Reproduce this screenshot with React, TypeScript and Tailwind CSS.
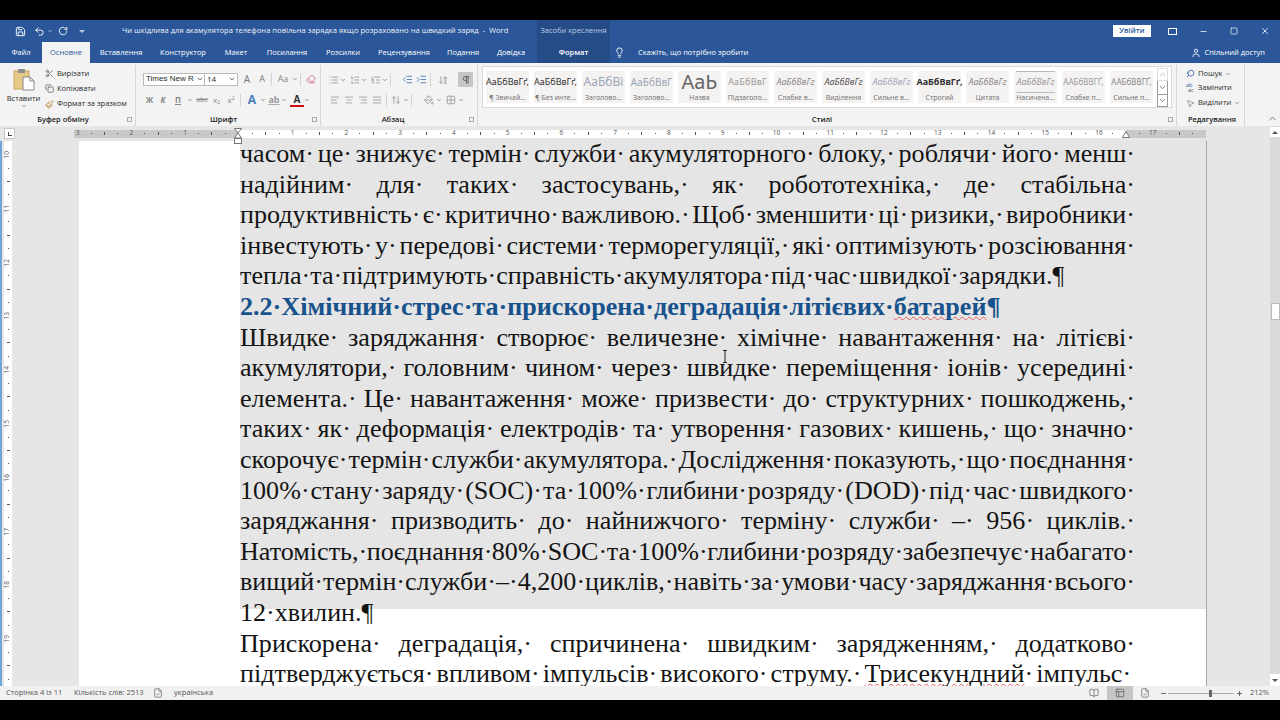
import type { ReactNode } from "react";
import {
  AlignCenter, AlignJustify, AlignLeft, AlignRight, ArrowDownAZ, BookOpen, ChevronDown, ChevronUp, Copy,
  Eraser, FileCheck, Grid2x2, IndentDecrease, IndentIncrease, Layout, Lightbulb, List, ListOrdered, ListTree,
  Minus, MousePointer2, Paintbrush, PaintBucket, Pilcrow, Plus, RotateCw, Save, Scissors, Search, Square,
  Undo2, User, X, ArrowUpDown,
} from "lucide-react";

const tabs = [
  { label: "Файл", w: "w-[42px]" },
  { label: "Основне", w: "w-[48px]", active: true },
  { label: "Вставлення", w: "w-[62px]" },
  { label: "Конструктор", w: "w-[62px]" },
  { label: "Макет", w: "w-[44px]" },
  { label: "Посилання", w: "w-[58px]" },
  { label: "Розсилки", w: "w-[54px]" },
  { label: "Рецензування", w: "w-[68px]" },
  { label: "Подання", w: "w-[50px]" },
  { label: "Довідка", w: "w-[46px]" },
];

const styles = [
  { s: "АаБбВвГґ,", l: "¶ Звичай...", c: "text-[9px] text-[#333]" },
  { s: "АаБбВвГґ,", l: "¶ Без инте...", c: "text-[9px] text-[#333]" },
  { s: "АаБбВі", l: "Заголово...", c: "text-[12px] text-[#9aa5b5]" },
  { s: "АаБбВвГ", l: "Заголово...", c: "text-[10px] text-[#9aa5b5]" },
  { s: "АаЬ", l: "Назва", c: "text-[20px] leading-[20px] text-[#666]" },
  { s: "АаБбВвГ", l: "Підзаголо...", c: "text-[9px] tracking-wide text-[#999]" },
  { s: "АаБбВвГг", l: "Слабке в...", c: "text-[9px] italic text-[#888]" },
  { s: "АаБбВвГг", l: "Виділення", c: "text-[9px] italic text-[#555]" },
  { s: "АаБбВвГг", l: "Сильне в...", c: "text-[9px] italic text-[#a0a8b8]" },
  { s: "АаБбВвГґ,", l: "Строгий", c: "text-[9px] font-bold text-[#333]" },
  { s: "АаБбВвГг", l: "Цитата", c: "text-[9px] italic text-[#888]" },
  { s: "АаБбВвГг", l: "Насичена...", c: "text-[9px] italic text-[#999] border-y border-[#bbb]" },
  { s: "ААБбВВГҐ,", l: "Слабке п...", c: "text-[8px] text-[#999]" },
  { s: "ААБбВВГҐ,", l: "Сильне п...", c: "text-[8px] text-[#888]" },
];

const pageLines: { t: ReactNode; plain?: boolean; heading?: boolean }[] = [
  { t: "часом· це· знижує· термін· служби· акумуляторного· блоку,· роблячи· його· менш·" },
  { t: "надійним· для· таких· застосувань,· як· робототехніка,· де· стабільна·" },
  { t: "продуктивність· є· критично· важливою.· Щоб· зменшити· ці· ризики,· виробники·" },
  { t: "інвестують· у· передові· системи· терморегуляції,· які· оптимізують· розсіювання·" },
  { t: "тепла· та· підтримують· справність· акумулятора· під· час· швидкої· зарядки.¶", plain: true },
  {
    t: (
      <>
        2.2· Хімічний· стрес· та· прискорена· деградація· літієвих·{" "}
        <span className="underline decoration-wavy decoration-[#e06060] decoration-1">батарей</span>¶
      </>
    ),
    plain: true,
    heading: true,
  },
  { t: "Швидке· заряджання· створює· величезне· хімічне· навантаження· на· літієві·" },
  { t: "акумулятори,· головним· чином· через· швидке· переміщення· іонів· усередині·" },
  { t: "елемента.· Це· навантаження· може· призвести· до· структурних· пошкоджень,·" },
  { t: "таких· як· деформація· електродів· та· утворення· газових· кишень,· що· значно·" },
  { t: "скорочує· термін· служби· акумулятора.· Дослідження· показують,· що· поєднання·" },
  { t: "100%· стану· заряду· (SOC)· та· 100%· глибини· розряду· (DOD)· під· час· швидкого·" },
  { t: "заряджання· призводить· до· найнижчого· терміну· служби· –· 956· циклів.·" },
  { t: "Натомість,· поєднання· 80%· SOC· та· 100%· глибини· розряду· забезпечує· набагато·" },
  { t: "вищий· термін· служби· –· 4,200· циклів,· навіть· за· умови· часу· заряджання· всього·" },
  { t: "12· хвилин.¶", plain: true },
  { t: "Прискорена· деградація,· спричинена· швидким· зарядженням,· додатково·" },
  {
    t: (
      <>
        підтверджується· впливом· імпульсів· високого· струму.·{" "}
        <span className="underline decoration-wavy decoration-[#e06060] decoration-1">Трисекундний</span>· імпульс·
      </>
    ),
  },
];

// ruler marks: number, dot, tick, dot for every centimetre
const hMarks = [3, 2, 1, 0, 1, 2, 3, 4, 5, 6, 7, 8, 9, 10, 11, 12, 13, 14, 15, 16, 17];
const vMarks = [10, 11, 12, 13, 14, 15, 16, 17, 18, 19];

function Slot({ w, children, className = "" }: { w: string; children?: ReactNode; className?: string }) {
  return <div className={`flex h-[14px] shrink-0 items-center justify-center ${w} ${className}`}>{children}</div>;
}

function Caret() {
  return <ChevronDown size={6} strokeWidth={3} className="shrink-0 text-[#777]" />;
}

function GroupLabel({ children, launcher = true, pr = "" }: { children: ReactNode; launcher?: boolean; pr?: string }) {
  return (
    <div className={`relative mt-auto mb-[1px] text-center text-[7.5px] font-semibold leading-[11px] text-[#222] ${pr}`}>
      {children}
      {launcher && <span className="absolute right-[3px] top-[3px] h-[5px] w-[5px] border border-[#aaa]" />}
    </div>
  );
}

function Sep() {
  return <div className="mx-[2px] h-[13px] w-px shrink-0 bg-[#d4d4d4]" />;
}

function PasteIcon() {
  return (
    <svg width="22" height="23" viewBox="0 0 22 23">
      <rect x="1" y="3" width="15" height="18" fill="#e8c98a" stroke="#c9a25e" />
      <rect x="5" y="1" width="7" height="4" fill="#8c8c8c" />
      <path d="M10 9h7l4 4v9H10z" fill="#fff" stroke="#888" />
      <path d="M17 9v4h4" fill="none" stroke="#888" />
    </svg>
  );
}

function StatusViewIcons() {
  return (
    <div className="flex h-full items-center">
      <Slot w="w-[26px]">
        <BookOpen size={10} className="text-[#777]" />
      </Slot>
      <div className="flex h-full w-[26px] items-center justify-center bg-[#c6c6c6]">
        <Layout size={10} className="text-[#666]" />
      </div>
      <Slot w="w-[24px]">
        <FileCheck size={10} className="text-[#777]" />
      </Slot>
    </div>
  );
}

export default function App() {
  return (
    <div className="flex h-screen w-full flex-col overflow-hidden bg-black font-['Open_Sans',sans-serif]">
      <div className="h-5 shrink-0" />

      {/* title bar */}
      <div className="flex h-[22px] shrink-0 items-center bg-[#2b579a] text-white">
        <div className="flex w-[122px] shrink-0 items-center pl-[15px]">
          <Save size={11} />
          <Undo2 size={11} className="ml-[8px]" />
          <ChevronDown size={6} className="ml-[2px]" />
          <RotateCw size={10} className="ml-[5px]" />
          <div className="ml-[11px] h-0 w-0 border-x-[3px] border-t-[3px] border-x-transparent border-t-white/70" />
        </div>
        <div className="w-[415px] shrink-0 whitespace-pre text-[7.6px] text-white/95">
          Чи шкідлива для акамулятора телефона повільна зарядка якщо розраховано на швидкий заряд  -  Word
        </div>
        <div className="flex h-full w-[73px] shrink-0 items-center justify-center bg-[#264c87] text-[7.5px] text-[#b9c9e2]">
          Засоби креслення
        </div>
        <div className="ml-[503px] flex h-[12px] w-[38px] items-center justify-center bg-white text-[7.5px] font-semibold text-[#2b579a]">
          Увійти
        </div>
        <Slot w="w-[16px]" className="ml-[13px]">
          <div className="h-[7px] w-[9px] border border-white" />
        </Slot>
        <Slot w="w-[16px]" className="ml-[15px]">
          <Minus size={9} />
        </Slot>
        <Slot w="w-[16px]" className="ml-[15px]">
          <Square size={8} />
        </Slot>
        <Slot w="w-[16px]" className="ml-[15px]">
          <X size={10} />
        </Slot>
      </div>

      {/* tabs */}
      <div className="flex h-[21px] shrink-0 items-stretch bg-[#2b579a] text-[7.5px] text-white">
        {tabs.map((tab) => (
          <div
            key={tab.label}
            className={`flex shrink-0 items-center justify-center ${tab.w} ${tab.active ? "bg-[#f3f3f3] text-[#2b579a]" : ""}`}
          >
            {tab.label}
          </div>
        ))}
        <div className="ml-[3px] flex w-[73px] shrink-0 items-center justify-center bg-[#264c87] font-semibold">Формат</div>
        <Lightbulb size={11} className="ml-[4px] mr-[13px] self-center" />
        <div className="self-center">Скажіть, що потрібно зробити</div>
        <div className="ml-auto flex items-center gap-[3px] pr-[15px]">
          <User size={10} />
          Спільний доступ
        </div>
      </div>

      {/* ribbon */}
      <div className="flex h-[63px] shrink-0 bg-[#f3f3f3] pt-[2px] text-[7.5px] text-[#2a2a2a]">
        <div className="ml-[3px] flex w-[133px] shrink-0 flex-col border-r border-[#d6d6d6]">
          <div className="flex">
            <div className="flex w-[41px] flex-col items-center pt-[3px]">
              <PasteIcon />
              <div className="mt-[2px] leading-[10px]">Вставити</div>
              <Caret />
            </div>
            <div className="flex flex-col pt-[1px] pl-[1px]">
              <div className="flex h-[15px] items-center gap-[3px]"><Scissors size={9} className="text-[#666]" />Вирізати</div>
              <div className="flex h-[15px] items-center gap-[3px]"><Copy size={9} className="text-[#666]" />Копіювати</div>
              <div className="flex h-[16px] items-center gap-[3px]"><Paintbrush size={9} className="text-[#b9862f]" />Формат за зразком</div>
            </div>
          </div>
          <GroupLabel pr="pr-[12px]">Буфер обміну</GroupLabel>
        </div>

        <div className="ml-[3px] flex w-[182px] shrink-0 flex-col border-r border-[#d6d6d6] pl-[4px]">
          <div className="mt-[7px] flex items-center">
            <div className="flex h-[13px] w-[62px] items-center justify-between overflow-hidden whitespace-nowrap border border-[#bbb] bg-white pl-[2px] font-['Liberation_Sans',sans-serif] text-[8px]">
              Times New R<ChevronDown size={8} className="shrink-0" />
            </div>
            <div className="flex h-[13px] w-[33px] items-center justify-between border border-l-0 border-[#bbb] bg-white pl-[2px] pr-[1px] text-[8px]">
              14<ChevronDown size={8} />
            </div>
            <Slot w="w-[16px]" className="ml-[1px] text-[10px] text-[#777]">A</Slot>
            <Slot w="w-[14px]" className="text-[9px] text-[#777]">A</Slot>
            <Sep />
            <Slot w="w-[18px]" className="text-[9px] text-[#888]">Aa</Slot>
            <Caret />
            <Sep />
            <Slot w="w-[16px]"><Eraser size={10} className="text-[#d0607a]" /></Slot>
          </div>
          <div className="mt-[7px] flex items-center text-[8px] font-bold text-[#888]">
            <Slot w="w-[13px]">Ж</Slot>
            <Slot w="w-[14px]" className="italic">К</Slot>
            <Slot w="w-[16px]" className="underline">П</Slot>
            <span className="ml-[1px] flex"><Caret /></span>
            <Slot w="w-[14px]" className="ml-[2px] font-normal line-through text-[7px]">abc</Slot>
            <Slot w="w-[15px]" className="font-normal">x₂</Slot>
            <Slot w="w-[14px]" className="font-normal">x²</Slot>
            <Sep />
            <Slot w="w-[16px]" className="ml-[1px] text-[12px] text-[#4a7ebb]">A</Slot>
            <Caret />
            <Slot w="w-[14px]" className="ml-[1px] text-[9px] text-[#999] underline decoration-[#aaa]">ab</Slot>
            <Caret />
            <Slot w="w-[14px]" className="ml-[3px] border-b-2 border-[#d01010] text-[10px] text-[#333]">A</Slot>
            <Caret />
          </div>
          <GroupLabel pr="pr-[16px]">Шрифт</GroupLabel>
        </div>

        <div className="ml-[2px] flex w-[155px] shrink-0 flex-col border-r border-[#d6d6d6] pl-[5px] text-[#999]">
          <div className="mt-[7px] flex items-center">
            <Slot w="w-[12px]"><List size={10} /></Slot><Caret />
            <Slot w="w-[12px]" className="ml-[3px]"><ListOrdered size={10} /></Slot><Caret />
            <Slot w="w-[12px]" className="ml-[3px]"><ListTree size={10} /></Slot><Caret />
            <Sep />
            <Slot w="w-[14px]" className="ml-[7px]"><IndentDecrease size={11} className="text-[#4f7fb8]" /></Slot>
            <Slot w="w-[14px]"><IndentIncrease size={11} className="text-[#4f7fb8]" /></Slot>
            <Sep />
            <Slot w="w-[14px]" className="ml-[3px]"><ArrowDownAZ size={10} /></Slot>
            <div className="ml-[8px] flex h-[15px] w-[15px] items-center justify-center bg-[#c6c6c6]">
              <Pilcrow size={10} className="text-[#555]" />
            </div>
          </div>
          <div className="mt-[6px] flex items-center">
            <Slot w="w-[14px]"><AlignLeft size={10} /></Slot>
            <Slot w="w-[14px]"><AlignCenter size={10} /></Slot>
            <Slot w="w-[14px]"><AlignRight size={10} /></Slot>
            <Slot w="w-[14px]"><AlignJustify size={10} /></Slot>
            <Sep />
            <Slot w="w-[14px]"><ArrowUpDown size={10} /></Slot><Caret />
            <Sep />
            <Slot w="w-[14px]" className="ml-[8px]"><PaintBucket size={10} /></Slot><Caret />
            <Slot w="w-[14px]" className="ml-[2px]"><Grid2x2 size={10} /></Slot><Caret />
          </div>
          <GroupLabel pr="pr-[19px]">Абзац</GroupLabel>
        </div>

        <div className="ml-[2px] flex w-[697px] shrink-0 flex-col border-r border-[#d6d6d6] pl-[2px]">
          <div className="mt-[1px] flex h-[42px] w-[690px] items-center border border-[#d9d9d9] bg-white pl-[3px]">
            <div className="flex gap-[5px]">
              {styles.map((st, i) => (
                <div key={i} className="flex h-[32px] w-[43px] flex-col items-center bg-[#f5f2f2] font-['Noto_Sans',sans-serif]">
                  <div className={`flex h-[22px] shrink-0 items-center whitespace-nowrap ${st.c}`}>{st.s}</div>
                  <div className="whitespace-nowrap text-[7px] leading-[10px] text-[#777]">{st.l}</div>
                </div>
              ))}
            </div>
            <div className="ml-[4px] flex w-[11px] flex-col">
              <div className="flex h-[13px] items-center justify-center border border-[#ddd]"><ChevronUp size={9} className="text-[#aaa]" /></div>
              <div className="flex h-[13px] items-center justify-center border-x border-[#999]"><ChevronDown size={9} className="text-[#555]" /></div>
              <div className="flex h-[13px] items-center justify-center border border-[#999]"><ChevronDown size={9} className="text-[#555]" /></div>
            </div>
          </div>
          <GroupLabel pr="pr-[14px]">Стилі</GroupLabel>
        </div>

        <div className="ml-[1px] flex w-[67px] shrink-0 flex-col border-r border-[#d6d6d6] pl-[8px] font-medium">
          <div className="flex h-[15px] items-center gap-[3px] pt-[2px]"><Search size={9} className="-scale-x-100 text-[#2b579a]" />Пошук<Caret /></div>
          <div className="flex h-[15px] items-center gap-[3px]">
            <span className="flex w-[9px] flex-col text-[5.5px] leading-[5px]">
              <span className="text-[#2b579a]">ab</span>
              <span className="pl-[2px] text-[#555]">ac</span>
            </span>
            Замінити
          </div>
          <div className="flex h-[16px] items-center gap-[3px]"><MousePointer2 size={9} className="text-[#888]" />Виділити<Caret /></div>
          <GroupLabel launcher={false} pr="pr-[6px]">Редагування</GroupLabel>
        </div>
        <div className="ml-auto flex items-end pb-[2px] pr-[2px]">
          <ChevronUp size={11} className="text-[#666]" />
        </div>
      </div>

      {/* working area */}
      <div className="relative flex min-h-0 flex-1 bg-[#e6e6e6]">
        <div className="flex min-w-0 flex-1 flex-col">
          <div className="flex h-[15px] shrink-0 items-center">
            <div className="ml-[4px] flex h-[11px] w-[11px] items-center justify-center border border-[#c8c8c8] bg-white">
              <div className="h-[4px] w-[4px] border-b border-l border-[#444]" />
            </div>
            {/* horizontal ruler */}
            <div className="relative ml-[56px] flex h-[8px] w-[1135px] items-center bg-[linear-gradient(90deg,#e6e6e6_3px,#c8c8c8_3px,#c8c8c8_167px,#fff_167px,#fff_1055px,#c8c8c8_1055px)] text-[6.5px] leading-none text-[#555]">
              {hMarks.map((n, i) => (
                <div key={i} className="flex w-[53.75px] shrink-0 items-center">
                  <span className="w-[13.4px] text-center">{n === 0 ? "" : n}</span>
                  <span className="flex w-[13.4px] justify-center"><span className="h-px w-px bg-[#555]" /></span>
                  <span className="flex w-[13.4px] justify-center"><span className="h-[3px] w-px bg-[#555]" /></span>
                  <span className="flex w-[13.4px] justify-center"><span className="h-px w-px bg-[#555]" /></span>
                </div>
              ))}
              <svg className="absolute left-[163px] top-[-2px]" width="8" height="17" viewBox="0 0 8 17">
                <path d="M.5.5h7L4 5zM4 5l3.5 5h-7z" fill="#fff" stroke="#777" />
                <rect x=".5" y="10.5" width="7" height="5" fill="#fff" stroke="#777" />
              </svg>
              <svg className="absolute left-[1051px] top-[1px]" width="8" height="7" viewBox="0 0 8 7">
                <path d="M4 .5 7.5 6.5h-7z" fill="#fff" stroke="#777" />
              </svg>
            </div>
          </div>

          <div className="flex min-h-0 flex-1">
            <div className="w-[2px] shrink-0 bg-[#6ea6d8]" />
            {/* vertical ruler */}
            <div className="ml-[2px] flex w-[8px] shrink-0 flex-col items-center overflow-hidden bg-white pt-[7px] text-[6.5px] leading-none text-[#555]">
              {vMarks.map((n) => (
                <div key={n} className="flex h-[53.8px] shrink-0 flex-col items-center">
                  <span className="flex h-[13.4px] items-center -rotate-90">{n}</span>
                  <span className="flex h-[13.4px] items-center"><span className="h-px w-px bg-[#555]" /></span>
                  <span className="flex h-[13.4px] items-center"><span className="h-px w-[3px] bg-[#555]" /></span>
                  <span className="flex h-[13.4px] items-center"><span className="h-px w-px bg-[#555]" /></span>
                </div>
              ))}
            </div>

            {/* page */}
            <div className="ml-[67px] flex w-[1128px] shrink-0 border-r border-[#a8a8a8] bg-white pl-[161px]">
              <div className="min-w-0 flex-1 overflow-hidden bg-[linear-gradient(#e5e5e5_468px,#fff_468px)] pr-[71px] font-['Liberation_Serif',serif] text-[26.1px] leading-[30.6px] text-[#141414]">
                <div className="-mt-[2px]">
                  {pageLines.map((line, i) => (
                    <div
                      key={i}
                      className={`whitespace-nowrap ${line.plain ? "[word-spacing:-0.25em]" : "text-justify [text-align-last:justify] [word-spacing:-0.4em]"} ${line.heading ? "font-bold text-[#17528c]" : ""}`}
                    >
                      {line.t}
                    </div>
                  ))}
                </div>
              </div>
            </div>
          </div>
        </div>

        {/* scrollbar */}
        <div className="flex w-[10px] shrink-0 flex-col items-center bg-[#dadada] pt-[1px]">
          <div className="flex h-[10px] w-[10px] items-center justify-center bg-white">
            <div className="h-0 w-0 border-x-[3px] border-b-[3px] border-x-transparent border-b-[#555]" />
          </div>
          <div className="mt-[166px] h-[17px] w-[9px] border border-[#bbb] bg-white" />
          <div className="mt-auto flex h-[12px] w-[10px] items-center justify-center bg-white">
            <div className="h-0 w-0 border-x-[3px] border-t-[3px] border-x-transparent border-t-[#555]" />
          </div>
        </div>

        {/* text cursor */}
        <svg className="absolute left-[722px] top-[224px]" width="6" height="13" viewBox="0 0 6 13">
          <path d="M1 .5h4M3 .5v12M1 12.5h4" fill="none" stroke="#222" />
        </svg>
      </div>

      {/* status bar */}
      <div className="flex h-[14px] shrink-0 items-center bg-[#f1f1f1] pl-[6px] text-[7.5px] text-[#555]">
        <div className="w-[68px] shrink-0">Сторінка 4 із 11</div>
        <div className="w-[79px] shrink-0">Кількість слів: 2513</div>
        <FileCheck size={10} className="text-[#777]" />
        <div className="ml-[11px]">українська</div>
        <div className="ml-auto flex h-full items-center">
          <StatusViewIcons />
          <Minus size={7} strokeWidth={3} className="ml-[3px] text-[#555]" />
          <div className="relative ml-[1px] h-px w-[66px] bg-[#aaa]">
            <div className="absolute left-[41px] top-[-3px] h-[7px] w-[3px] bg-[#666]" />
          </div>
          <Plus size={7} strokeWidth={3} className="ml-[2px] text-[#555]" />
          <div className="ml-[7px] w-[30px]">212%</div>
        </div>
      </div>

      <div className="h-5 shrink-0" />
    </div>
  );
}
